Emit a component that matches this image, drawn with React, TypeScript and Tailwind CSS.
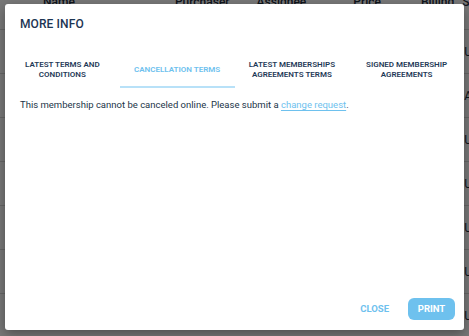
import React from "react";

const tabs = [
  { label: ["LATEST TERMS AND", "CONDITIONS"], active: false },
  { label: ["CANCELLATION TERMS"], active: true },
  { label: ["LATEST MEMBERSHIPS", "AGREEMENTS TERMS"], active: false },
  { label: ["SIGNED MEMBERSHIP", "AGREEMENTS"], active: false },
];

export default function App() {
  return (
    <div
      className="relative w-[469px] h-[336px] overflow-hidden bg-white"
      style={{ fontFamily: "Roboto, 'Liberation Sans', sans-serif" }}
    >
      {/* background table */}
      <div className="flex flex-col text-[12px] text-[#1f2d3d]">
        <div className="flex h-[14px] items-end -mt-[3px] font-medium">
          <span className="ml-[43px]">Name</span>
          <span className="ml-[100px]">Purchaser</span>
          <span className="ml-[27px]">Assignee</span>
          <span className="ml-[47px]">Price</span>
          <span className="ml-[40px]">Billing</span>
          <span className="ml-[8px]">St</span>
        </div>
        <div className="flex flex-col mt-[18px]">
          {["U", "A", "U", "U", "U", "U", "U"].map((c, i) => (
            <div key={i} className="h-[44px] border-t border-[#d8d8d8] flex items-center justify-end">
              <span className="translate-x-[3px]">{c}</span>
            </div>
          ))}
        </div>
      </div>

      {/* overlay */}
      <div className="absolute inset-0 bg-black/[0.53]" />

      {/* modal */}
      <div className="absolute left-[5px] top-[4px] w-[459px] h-[326px] bg-white rounded-[3px] shadow-[0_4px_12px_rgba(0,0,0,0.35)] flex flex-col">
        <div className="h-[40px] flex items-center px-[15px]">
          <h2 className="text-[12px] font-medium text-[#1c3553] tracking-[0.1px]">MORE INFO</h2>
        </div>
        <div className="mt-[10px] grid grid-cols-4 h-[34px]">
          {tabs.map((t, i) => (
            <div
              key={i}
              className={`flex flex-col items-center justify-center text-center text-[8px] font-semibold leading-[10.5px] ${
                t.active ? "text-[#6ec1ee] border-b-2 border-[#b8e1f8]" : "text-[#1f3a58] border-b-2 border-transparent"
              }`}
            >
              {t.label.map((l, j) => (
                <span key={j}>{l}</span>
              ))}
            </div>
          ))}
        </div>
        <p className="pt-[10px] px-[15px] text-[9.5px] leading-[14px] text-[#223548]">
          This membership cannot be canceled online. Please submit a{" "}
          <span className="text-[#6ec1ee] underline underline-offset-2">change request</span>.
        </p>
        <div className="flex-1" />
        <div className="flex items-center justify-end pr-[9px] pb-[10px] gap-[19px]">
          <button className="text-[9.5px] font-bold text-[#6ec1ee]">CLOSE</button>
          <button className="h-[22px] w-[47px] rounded-[6px] bg-[#6ec1ee] text-white text-[9.5px] font-bold">
            PRINT
          </button>
        </div>
      </div>
    </div>
  );
}
